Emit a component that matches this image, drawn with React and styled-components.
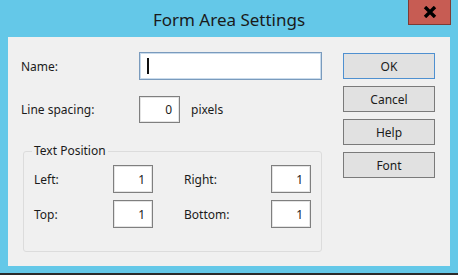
import React from "react";
import styled, { createGlobalStyle } from "styled-components";

const Global = createGlobalStyle`
  html, body {
    margin: 0;
    padding: 0;
    background: #64c8e8;
  }
  * {
    box-sizing: border-box;
  }
`;

const Window = styled.div`
  width: 458px;
  height: 275px;
  background: #64c8e8;
  border-bottom: 2px solid #2b2b2b;
  display: flex;
  flex-direction: column;
  font-family: "Noto Sans", "Open Sans", sans-serif;
  font-size: 12px;
  color: #1b1b1b;
`;

const TitleBar = styled.div`
  height: 37px;
  display: grid;
  grid-template-columns: 1fr auto 1fr;
  align-items: start;
`;

const Title = styled.div`
  grid-column: 2;
  font-size: 17px;
  line-height: 20px;
  padding-top: 10px;
  color: #1a1a1a;
`;

const CloseButton = styled.div`
  grid-column: 3;
  justify-self: end;
  margin-right: 7px;
  width: 43px;
  height: 25px;
  background: #c75c53;
  border: 1px solid #7d3b35;
  border-top: none;
  display: flex;
  align-items: center;
  justify-content: center;
`;

const Body = styled.div`
  margin: 0 8px;
  height: 229px;
  background: #f0f0f0;
  display: flex;
  padding: 15px 15px 0 13px;
`;

const LeftColumn = styled.div`
  width: 301px;
  display: flex;
  flex-direction: column;
`;

const Row = styled.div`
  display: flex;
  align-items: center;
  height: ${(p) => p.$h}px;
  margin-bottom: ${(p) => p.$mb || 0}px;
`;

const Label = styled.span`
  width: ${(p) => p.$w}px;
  flex: none;
`;

const Input = styled.div`
  width: ${(p) => p.$w}px;
  height: ${(p) => p.$h || 28}px;
  background: #fff;
  border: 1px solid ${(p) => (p.$focus ? "#7a9bbd" : "#7f7f7f")};
  box-shadow: inset 0 0 0 1px ${(p) => (p.$focus ? "#c9dbec" : "#e4e4e4")};
  display: flex;
  align-items: center;
  justify-content: ${(p) => (p.$focus ? "flex-start" : "flex-end")};
  padding: 0 7px;
  flex: none;
`;

const Caret = styled.div`
  width: 2px;
  height: 16px;
  background: #111;
`;

const Suffix = styled.span`
  margin-left: 11px;
`;

const Group = styled.fieldset`
  margin: 20px 0 0 2px;
  width: 299px;
  height: 109px;
  border: 1px solid #dcdcdc;
  border-radius: 3px;
  padding: 6px 0 0 10px;
  min-inline-size: 0;
`;

const Legend = styled.legend`
  padding: 0 2px;
  margin-left: -2px;
  line-height: 16px;
`;

const GroupGrid = styled.div`
  display: grid;
  grid-template-columns: 79px 71px 87px 40px;
  grid-auto-rows: 28px;
  row-gap: 7px;
  align-items: center;
`;

const ButtonColumn = styled.div`
  margin-left: 21px;
  padding-top: 1px;
  display: flex;
  flex-direction: column;
  gap: 7px;
`;

const Button = styled.div`
  width: 92px;
  height: 26px;
  background: #e1e1e1;
  border: 1px solid ${(p) => (p.$default ? "#4f90d0" : "#7a7a7a")};
  display: flex;
  align-items: center;
  justify-content: center;
`;

export default function App() {
  return (
    <>
      <Global />
      <Window>
        <TitleBar>
          <Title>Form Area Settings</Title>
          <CloseButton>
            <svg width="14" height="12" viewBox="0 0 14 12">
              <path d="M2 1 L12 11 M12 1 L2 11" stroke="#000" strokeWidth="3.4" />
            </svg>
          </CloseButton>
        </TitleBar>
        <Body>
          <LeftColumn>
            <Row $h={28} $mb={16}>
              <Label $w={118}>Name:</Label>
              <Input $w={183} $focus>
                <Caret />
              </Input>
            </Row>
            <Row $h={27}>
              <Label $w={118}>Line spacing:</Label>
              <Input $w={41} $h={27}>0</Input>
              <Suffix>pixels</Suffix>
            </Row>
            <Group>
              <Legend>Text Position</Legend>
              <GroupGrid>
                <span>Left:</span>
                <Input $w={40}>1</Input>
                <span>Right:</span>
                <Input $w={40}>1</Input>
                <span>Top:</span>
                <Input $w={40}>1</Input>
                <span>Bottom:</span>
                <Input $w={40}>1</Input>
              </GroupGrid>
            </Group>
          </LeftColumn>
          <ButtonColumn>
            <Button $default>OK</Button>
            <Button>Cancel</Button>
            <Button>Help</Button>
            <Button>Font</Button>
          </ButtonColumn>
        </Body>
      </Window>
    </>
  );
}
